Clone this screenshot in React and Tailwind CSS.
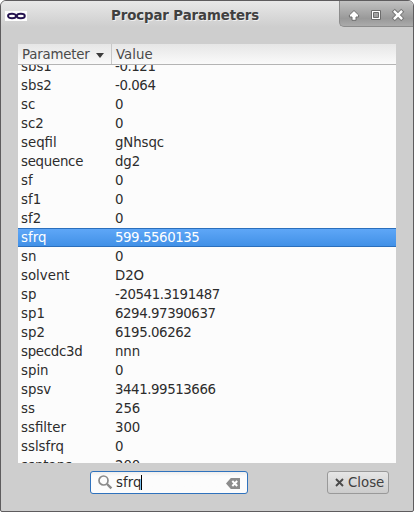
const rows = [
  ["sbs1", "-0.121"],
  ["sbs2", "-0.064"],
  ["sc", "0"],
  ["sc2", "0"],
  ["seqfil", "gNhsqc"],
  ["sequence", "dg2"],
  ["sf", "0"],
  ["sf1", "0"],
  ["sf2", "0"],
  ["sfrq", "599.5560135"],
  ["sn", "0"],
  ["solvent", "D2O"],
  ["sp", "-20541.3191487"],
  ["sp1", "6294.97390637"],
  ["sp2", "6195.06262"],
  ["specdc3d", "nnn"],
  ["spin", "0"],
  ["spsv", "3441.99513666"],
  ["ss", "256"],
  ["ssfilter", "300"],
  ["sslsfrq", "0"],
  ["ssntaps", "200"],
];

function AppIcon() {
  return (
    <svg className="ml-1 mt-2.5 h-[11px] w-[22px] shrink-0" viewBox="0 0 22 11">
      <rect width="22" height="10" fill="#fdfdfd" />
      <ellipse cx="7" cy="5" rx="4" ry="2.3" fill="none" stroke="#24124f" strokeWidth="1.9" />
      <ellipse cx="15.8" cy="5" rx="4" ry="2.3" fill="none" stroke="#24124f" strokeWidth="1.9" />
    </svg>
  );
}

function WindowControls() {
  return (
    <div className="h-[26px] w-[74px] shrink-0 overflow-hidden rounded-bl-[5px] rounded-tr-[4px] border-b border-l border-[#8c8c8c] bg-linear-to-b from-[#c2c2c2] via-[#999999] via-70% to-[#ababab]">
      <svg className="block h-[25px] w-[73px]" viewBox="0 0 73 25">
        <g transform="translate(0 2)">
          <path d="M14 7.5 L18.6 12 V14 H16 V17.3 H12 V14 H9.4 V12 Z" strokeLinejoin="round" stroke="#6c6c6c" fill="#ffffff" />
          <path fillRule="evenodd" d="M31.5 7.5 H40.5 V16.5 H31.5 Z M33.5 9.5 V14.5 H38.5 V9.5 Z" stroke="#6c6c6c" fill="#ffffff" />
          <path d="M54.8 8.8 L61.2 15.2 M61.2 8.8 L54.8 15.2" stroke="#777777" strokeWidth="4.4" strokeLinecap="square" />
          <path d="M54.8 8.8 L61.2 15.2 M61.2 8.8 L54.8 15.2" stroke="#ffffff" strokeWidth="2.4" strokeLinecap="square" />
        </g>
      </svg>
    </div>
  );
}

export default function App() {
  return (
    <div className="h-[512px] w-[414px] bg-white font-['DejaVu_Sans',sans-serif] text-[13.33px] text-[#2c2c2c]">
      <div className="flex h-[512px] flex-col overflow-hidden rounded-t-[6px] rounded-b-[2px] border border-[#5e5c5e] bg-[#cecece]">
        <div className="flex h-[26px] shrink-0 bg-linear-to-b from-[#e8e8e8] to-[#cecece]">
          <AppIcon />
          <h1 className="ml-[84px] mt-[5px] flex-1 whitespace-nowrap text-[13.33px] leading-[19px] font-bold tracking-[-0.1px] text-[#404040] [text-shadow:1px_1px_0_#eeeeee]">
            Procpar Parameters
          </h1>
          <WindowControls />
        </div>

        <div className="ml-[17px] mt-[17px] flex h-[419px] w-[378px] shrink-0 flex-col overflow-hidden bg-[#fcfcfc]">
          <div className="flex h-[21px] shrink-0 border-b border-[#b4b4b4] bg-linear-to-b from-[#e6e6e6] to-[#fafafa] leading-[20px] text-[#4a4a4a]">
            <div className="flex w-[94px] border-r border-[#c8c8c8] pl-1 tracking-[-0.2px]">
              <span className="pt-px">Parameter</span>
              <svg className="ml-1.5 mt-[9px] h-[5px] w-[8px]" viewBox="0 0 8 5">
                <path d="M0 0 H8 L4 5 Z" fill="#3c3c3c" />
              </svg>
            </div>
            <div className="pl-1 pt-px">Value</div>
          </div>
          <div className="min-h-0 flex-1 overflow-hidden">
            <div className="-mt-2">
              {rows.map(([name, value]) => (
                <div
                  key={name}
                  className={
                    "flex h-[19px] pl-[3px] leading-[19px] " +
                    (name === "sfrq"
                      ? "bg-linear-to-b from-[#60a8f8] to-[#3f8fe6] text-white shadow-[inset_0_1px_0_#2b6fbc,inset_0_-1px_0_#2b6fbc]"
                      : "")
                  }
                >
                  <span className={name.length === 8 && name !== "ssfilter" ? "w-[94px] tracking-[-0.27px]" : "w-[94px]"}>
                    {name}
                  </span>
                  <span className={/\d$/.test(value) && value.length > 3 ? "tracking-[-0.42px]" : "tracking-[-0.1px]"}>
                    {value}
                  </span>
                </div>
              ))}
            </div>
          </div>
        </div>

        <div className="mt-2 flex h-[23px] shrink-0 pl-[89px]">
          <div className="flex h-[23px] w-[158px] items-center rounded-[3px] border border-[#2f72bd] bg-linear-to-b from-[#eeeeee] to-[#fcfcfc] to-20% pl-[7px]">
            <svg className="h-[15px] w-[15px]" viewBox="0 0 15 15" fill="none" stroke="#8a8a8a">
              <circle cx="5.5" cy="5.5" r="4.5" strokeWidth="1.7" />
              <path d="M9 9 L13.4 13.4" strokeWidth="2.4" />
            </svg>
            <span className="ml-[3px] leading-[21px]">sfrq</span>
            <span className="h-[15px] w-px bg-black" />
            <svg className="ml-auto mr-[7px] mt-[2px] h-[11px] w-[14px]" viewBox="0 0 14 11">
              <path d="M0 5.5 L4.8 0 H14 V11 H4.8 Z" fill="#8c8c8c" />
              <path d="M6.3 3 L11.2 8 M11.2 3 L6.3 8" stroke="#ffffff" strokeWidth="2" />
            </svg>
          </div>
          <button className="ml-[79px] flex h-[23px] w-[62px] items-center rounded-[3px] border border-[#999999] bg-linear-to-b from-[#e6e6e6] to-[#cccccc] pl-[7px] text-[#404040]">
            <svg className="h-[9px] w-[9px]" viewBox="0 0 9 9">
              <path d="M1 1 L8 8 M8 1 L1 8" stroke="#4a4a4a" strokeWidth="1.9" />
            </svg>
            <span className="ml-[4px] leading-[20px]">Close</span>
          </button>
        </div>
      </div>
    </div>
  );
}
